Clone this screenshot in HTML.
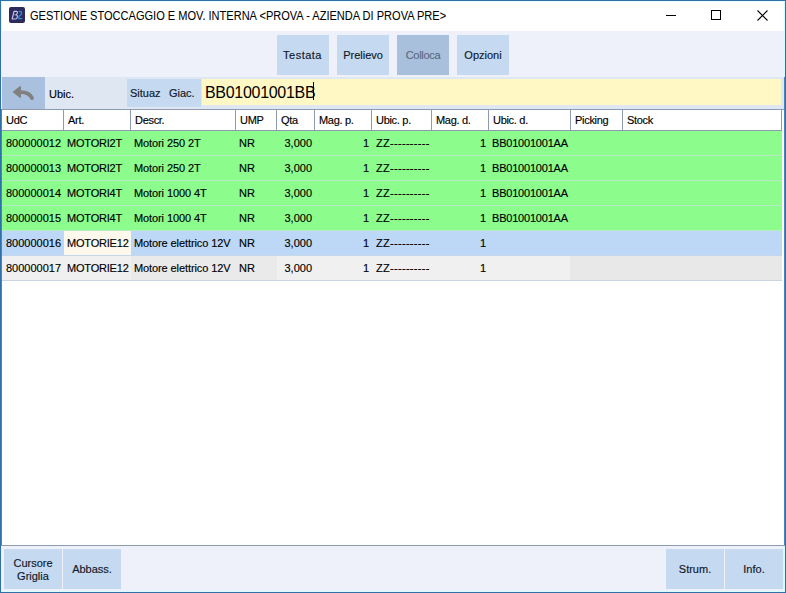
<!DOCTYPE html>
<html><head><meta charset="utf-8">
<style>
*{margin:0;padding:0;box-sizing:border-box}
html,body{width:786px;height:593px;overflow:hidden;background:#fff}
body{font-family:"Liberation Sans",sans-serif;color:#000;position:relative;-webkit-text-stroke:0.15px}
.a{position:absolute}
#win{left:0;top:0;width:786px;height:593px;background:#eef1f9;border:1px solid #3070a8;border-left-width:1px}
#title{left:1px;top:1px;width:784px;height:30px;background:#fff}
.ttl{left:30px;top:9px;font-size:12px;white-space:nowrap;transform:scaleX(0.92);transform-origin:0 0;-webkit-text-stroke:0.05px}
.btn{background:#c5d9f1;font-size:11px;text-align:center;color:#101828}
.tb{top:35px;width:52px;height:40px;line-height:40px}
.grid{left:2px;top:110px;width:782px;height:435px;background:#fff}
.hdr{top:0;height:21px;border-bottom:1px solid #8d9bb0;left:0;width:780px;background:#fff}
.hc{top:0;height:20px;font-size:11px;line-height:20px;white-space:nowrap;padding-left:4px;border-left:1px solid #8d9bb0;letter-spacing:-0.3px}
.row{left:0;height:25px;width:780px;border-bottom:1px solid #b9e6c0}
.c{top:0;height:24px;line-height:25px;font-size:11px;white-space:nowrap;padding-left:4px}
.r{text-align:right;padding-left:0;padding-right:2px}
</style></head>
<body>
<div id="win" class="a"></div>
<div id="title" class="a"></div>
<!-- app icon -->
<svg class="a" style="left:9px;top:7px" width="16" height="16" viewBox="0 0 16 16"><rect x="0" y="0" width="16" height="16" rx="2" fill="#2c2b5b"/><path d="M3.2 12 L5 4.3 L7.6 4.3 Q8.8 4.6 8.2 6.3 L7.3 7.8 Q8.9 8.6 8.3 10.4 Q7.8 12 6.6 12 Z M5.6 7.9 L6.6 7.9" fill="none" stroke="#c4c4ec" stroke-width="1.15" stroke-linejoin="round"/><path d="M9.7 5.2 Q10.4 4.4 11.6 4.4 Q12.8 4.6 12.6 6.3 Q12.4 7.9 10.8 8.6 Q9.8 9.3 9.8 11.7 H13.2" fill="none" stroke="#2f8ee2" stroke-width="1.2"/></svg>
<div class="a ttl">GESTIONE STOCCAGGIO E MOV. INTERNA &lt;PROVA - AZIENDA DI PROVA PRE&gt;</div>
<!-- window controls -->
<div class="a" style="left:666px;top:15px;width:10px;height:1px;background:#000"></div>
<div class="a" style="left:711px;top:10px;width:10px;height:10px;border:1px solid #000"></div>
<svg class="a" style="left:757px;top:10px" width="11" height="11" viewBox="0 0 11 11"><path d="M0.5 0.5L10.5 10.5M10.5 0.5L0.5 10.5" stroke="#000" stroke-width="1.1"/></svg>

<!-- toolbar -->
<div class="a btn tb" style="left:277px;letter-spacing:0.5px;text-indent:-1px">Testata</div>
<div class="a btn tb" style="left:337px">Prelievo</div>
<div class="a btn tb" style="left:397px;background:#a9c0dc;color:#5c6880;letter-spacing:-0.3px">Colloca</div>
<div class="a btn tb" style="left:457px">Opzioni</div>

<!-- search row -->
<div class="a" style="left:2px;top:77px;width:43px;height:32px;background:#a9c1de"></div>
<svg class="a" style="left:5px;top:78px" width="40" height="30" viewBox="0 0 40 30"><path d="M8.6 14 L15.2 8.8 L15.2 19.2 Z" fill="#808080" stroke="#808080" stroke-width="1.4" stroke-linejoin="round"/><path d="M14 14.2 Q24 13.6 27 20" fill="none" stroke="#808080" stroke-width="3.9" stroke-linecap="round"/></svg>
<div class="a" style="left:45px;top:77px;width:740px;height:32px;background:#dfe7f2"></div>
<div class="a" style="left:49px;top:77px;height:32px;line-height:34px;font-size:11px">Ubic.</div>
<div class="a" style="left:127px;top:79px;width:74px;height:28px;background:#c5d9f1"></div>
<div class="a" style="left:130px;top:79px;height:28px;line-height:28px;font-size:11px;color:#101828">Situaz</div>
<div class="a" style="left:169px;top:79px;height:28px;line-height:28px;font-size:11px;color:#101828">Giac.</div>
<div class="a" style="left:202px;top:79px;width:579px;height:26px;background:#fff8c4"></div>
<div class="a" style="left:205px;top:79px;height:26px;line-height:28px;font-size:16px;letter-spacing:-0.3px;color:#000;-webkit-text-stroke:0">BB01001001BB</div>
<div class="a" style="left:313px;top:82px;width:1px;height:18px;background:#000"></div>
<div class="a" style="left:1px;top:109px;width:784px;height:1px;background:#8d9bb0"></div>

<!-- grid -->
<div class="a grid">
  <div class="a hdr"></div>
  <div class="a hc" style="left:0;border-left:0">UdC</div>
  <div class="a hc" style="left:61px">Art.</div>
  <div class="a hc" style="left:128px">Descr.</div>
  <div class="a hc" style="left:233px">UMP</div>
  <div class="a hc" style="left:274px">Qta</div>
  <div class="a hc" style="left:312px">Mag. p.</div>
  <div class="a hc" style="left:369px">Ubic. p.</div>
  <div class="a hc" style="left:429px">Mag. d.</div>
  <div class="a hc" style="left:486px">Ubic. d.</div>
  <div class="a hc" style="left:568px">Picking</div>
  <div class="a hc" style="left:620px;width:160px;border-right:1px solid #8d9bb0">Stock</div>
</div>
<div id="rows">
<div class="a" style="left:2px;top:131px;width:780px;height:24px;background:#8cfc8c"></div>
<div class="a" style="left:2px;top:155px;width:780px;height:1px;background:#b4ecc4"></div>
<div class="a c" style="left:2px;top:131px">800000012</div>
<div class="a c" style="left:63px;top:131px;letter-spacing:-0.2px">MOTORI2T</div>
<div class="a c" style="left:130px;top:131px;letter-spacing:-0.1px">Motori 250 2T</div>
<div class="a c" style="left:235px;top:131px">NR</div>
<div class="a c r" style="left:276px;top:131px;width:38px">3,000</div>
<div class="a c r" style="left:314px;top:131px;width:57px">1</div>
<div class="a c" style="left:371px;top:131px;letter-spacing:0.3px;padding-left:5px">ZZ----------</div>
<div class="a c r" style="left:431px;top:131px;width:57px">1</div>
<div class="a c" style="left:488px;top:131px;letter-spacing:-0.2px">BB01001001AA</div>
<div class="a" style="left:2px;top:156px;width:780px;height:24px;background:#8cfc8c"></div>
<div class="a" style="left:2px;top:180px;width:780px;height:1px;background:#b4ecc4"></div>
<div class="a c" style="left:2px;top:156px">800000013</div>
<div class="a c" style="left:63px;top:156px;letter-spacing:-0.2px">MOTORI2T</div>
<div class="a c" style="left:130px;top:156px;letter-spacing:-0.1px">Motori 250 2T</div>
<div class="a c" style="left:235px;top:156px">NR</div>
<div class="a c r" style="left:276px;top:156px;width:38px">3,000</div>
<div class="a c r" style="left:314px;top:156px;width:57px">1</div>
<div class="a c" style="left:371px;top:156px;letter-spacing:0.3px;padding-left:5px">ZZ----------</div>
<div class="a c r" style="left:431px;top:156px;width:57px">1</div>
<div class="a c" style="left:488px;top:156px;letter-spacing:-0.2px">BB01001001AA</div>
<div class="a" style="left:2px;top:181px;width:780px;height:24px;background:#8cfc8c"></div>
<div class="a" style="left:2px;top:205px;width:780px;height:1px;background:#b4ecc4"></div>
<div class="a c" style="left:2px;top:181px">800000014</div>
<div class="a c" style="left:63px;top:181px;letter-spacing:-0.2px">MOTORI4T</div>
<div class="a c" style="left:130px;top:181px;letter-spacing:-0.1px">Motori 1000 4T</div>
<div class="a c" style="left:235px;top:181px">NR</div>
<div class="a c r" style="left:276px;top:181px;width:38px">3,000</div>
<div class="a c r" style="left:314px;top:181px;width:57px">1</div>
<div class="a c" style="left:371px;top:181px;letter-spacing:0.3px;padding-left:5px">ZZ----------</div>
<div class="a c r" style="left:431px;top:181px;width:57px">1</div>
<div class="a c" style="left:488px;top:181px;letter-spacing:-0.2px">BB01001001AA</div>
<div class="a" style="left:2px;top:206px;width:780px;height:24px;background:#8cfc8c"></div>
<div class="a" style="left:2px;top:230px;width:780px;height:1px;background:#b4ecc4"></div>
<div class="a c" style="left:2px;top:206px">800000015</div>
<div class="a c" style="left:63px;top:206px;letter-spacing:-0.2px">MOTORI4T</div>
<div class="a c" style="left:130px;top:206px;letter-spacing:-0.1px">Motori 1000 4T</div>
<div class="a c" style="left:235px;top:206px">NR</div>
<div class="a c r" style="left:276px;top:206px;width:38px">3,000</div>
<div class="a c r" style="left:314px;top:206px;width:57px">1</div>
<div class="a c" style="left:371px;top:206px;letter-spacing:0.3px;padding-left:5px">ZZ----------</div>
<div class="a c r" style="left:431px;top:206px;width:57px">1</div>
<div class="a c" style="left:488px;top:206px;letter-spacing:-0.2px">BB01001001AA</div>
<div class="a" style="left:2px;top:231px;width:780px;height:24px;background:#bcd8f6"></div>
<div class="a" style="left:2px;top:255px;width:780px;height:1px;background:#c8d8ec"></div>
<div class="a" style="left:64px;top:231px;width:67px;height:24px;background:#fdf8ec"></div>
<div class="a c" style="left:2px;top:231px">800000016</div>
<div class="a c" style="left:63px;top:231px;letter-spacing:-0.2px">MOTORIE12</div>
<div class="a c" style="left:130px;top:231px;letter-spacing:-0.1px">Motore elettrico 12V</div>
<div class="a c" style="left:235px;top:231px">NR</div>
<div class="a c r" style="left:276px;top:231px;width:38px">3,000</div>
<div class="a c r" style="left:314px;top:231px;width:57px">1</div>
<div class="a c" style="left:371px;top:231px;letter-spacing:0.3px;padding-left:5px">ZZ----------</div>
<div class="a c r" style="left:431px;top:231px;width:57px">1</div>
<div class="a" style="left:2px;top:256px;width:780px;height:24px;background:#f0f0f0"></div>
<div class="a" style="left:2px;top:280px;width:780px;height:1px;background:#c8d4e2"></div>
<div class="a" style="left:131px;top:256px;width:146px;height:24px;background:#eaeaea"></div>
<div class="a" style="left:570px;top:256px;width:212px;height:24px;background:#e8e8e8"></div>
<div class="a c" style="left:2px;top:256px">800000017</div>
<div class="a c" style="left:63px;top:256px;letter-spacing:-0.2px">MOTORIE12</div>
<div class="a c" style="left:130px;top:256px;letter-spacing:-0.1px">Motore elettrico 12V</div>
<div class="a c" style="left:235px;top:256px">NR</div>
<div class="a c r" style="left:276px;top:256px;width:38px">3,000</div>
<div class="a c r" style="left:314px;top:256px;width:57px">1</div>
<div class="a c" style="left:371px;top:256px;letter-spacing:0.3px;padding-left:5px">ZZ----------</div>
<div class="a c r" style="left:431px;top:256px;width:57px">1</div>
</div><!--/rows-->

<!-- inner window edge -->
<div class="a" style="left:1px;top:1px;width:1px;height:76px;background:#d6fbff"></div>
<div class="a" style="left:784px;top:1px;width:1px;height:76px;background:#d6fbff"></div>
<div class="a" style="left:1px;top:1px;width:784px;height:1px;background:#e6fdff"></div>
<div class="a" style="left:1px;top:546px;width:1px;height:46px;background:#d6fbff"></div>
<div class="a" style="left:784px;top:546px;width:1px;height:46px;background:#d6fbff"></div>
<div class="a" style="left:1px;top:591px;width:784px;height:1px;background:#d6fbff"></div>
<div class="a" style="left:1px;top:109px;width:1px;height:437px;background:#4a86bc"></div>
<div class="a" style="left:784px;top:77px;width:1px;height:469px;background:#4a86bc"></div>
<!-- bottom toolbar -->
<div class="a" style="left:1px;top:545px;width:784px;height:1px;background:#8d9bb0"></div>
<div class="a btn" style="left:4px;top:549px;width:58px;height:40px;padding-top:8px;line-height:13px">Cursore<br>Griglia</div>
<div class="a btn" style="left:63px;top:549px;width:58px;height:40px;line-height:40px">Abbass.</div>
<div class="a btn" style="left:666px;top:549px;width:58px;height:40px;line-height:40px">Strum.</div>
<div class="a btn" style="left:725px;top:549px;width:58px;height:40px;line-height:40px">Info.</div>
</body></html>
